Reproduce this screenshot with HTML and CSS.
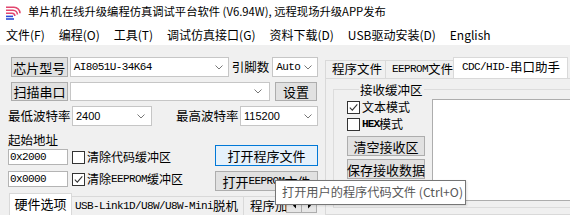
FILE: index.html
```html
<!DOCTYPE html>
<html lang="zh-CN">
<head>
<meta charset="utf-8">
<title>单片机在线升级编程仿真调试平台软件</title>
<link rel="stylesheet" href="styles.css">
</head>
<body>
<div class="win">
  <div class="titlebar">
    <svg class="appicon" viewBox="0 0 16 16" aria-hidden="true">
      <path d="M1 3.2 H9 A6 6 0 0 1 15 9.2" fill="none" stroke="#e2466f" stroke-width="1.6"/>
      <path d="M1 6.2 H8 A4.4 4.4 0 0 1 12.4 10.6" fill="none" stroke="#e2466f" stroke-width="1.6"/>
      <path d="M1 9.2 H7 A2.8 2.8 0 0 1 9.8 12" fill="none" stroke="#e2466f" stroke-width="1.6"/>
      <rect x="1" y="11.6" width="7" height="1.6" fill="#2c4bd6"/>
      <rect x="1" y="14.2" width="8" height="1.6" fill="#2c4bd6"/>
    </svg>
    <span class="title">单片机在线升级编程仿真调试平台软件 (V6.94W), 远程现场升级APP发布</span>
  </div>
  <div class="menubar">
    <span class="mi">文件(F)</span>
    <span class="mi">编程(O)</span>
    <span class="mi">工具(T)</span>
    <span class="mi">调试仿真接口(G)</span>
    <span class="mi">资料下载(D)</span>
    <span class="mi">USB驱动安装(D)</span>
    <span class="mi">English</span>
  </div>
  <div class="client">
    <div class="leftcol">
      <div class="row r1">
        <button class="btn b-lbl">芯片型号</button>
        <div class="combo c-chip"><span class="sl">AI8051U-34K64</span><svg class="chev" viewBox="0 0 8 5"><path d="M0.5 0.5L4 4L7.5 0.5"/></svg></div>
        <span class="lbl l-pin">引脚数</span>
        <div class="combo c-pin"><span class="sl">Auto</span><svg class="chev" viewBox="0 0 8 5"><path d="M0.5 0.5L4 4L7.5 0.5"/></svg></div>
      </div>
      <div class="row r2">
        <button class="btn b-lbl">扫描串口</button>
        <div class="combo c-port"><span></span><svg class="chev" viewBox="0 0 8 5"><path d="M0.5 0.5L4 4L7.5 0.5"/></svg></div>
        <button class="btn b-set">设置</button>
      </div>
      <div class="row r3">
        <span class="lbl l-baud">最低波特率</span>
        <div class="combo c-lo"><span class="num">2400</span><svg class="chev" viewBox="0 0 8 5"><path d="M0.5 0.5L4 4L7.5 0.5"/></svg></div>
        <span class="lbl l-baud2">最高波特率</span>
        <div class="combo c-hi"><span class="num">115200</span><svg class="chev" viewBox="0 0 8 5"><path d="M0.5 0.5L4 4L7.5 0.5"/></svg></div>
      </div>
      <div class="lower">
        <div class="addr">
          <div class="addr-lbl">起始地址</div>
          <div class="arow">
            <div class="input"><span class="sl">0x2000</span></div>
            <label class="chk"><span class="cb"></span>清除代码缓冲区</label>
          </div>
          <div class="arow arow2">
            <div class="input"><span class="sl">0x0000</span></div>
            <label class="chk"><span class="cb"><svg viewBox="0 0 11 11"><path d="M1.8 5.6L4.3 8.1L9.3 2.4"/></svg></span>清除<span class="sl">EEPROM</span>缓冲区</label>
          </div>
        </div>
        <div class="btncol">
          <button class="btn b-open hot">打开程序文件</button>
          <button class="btn b-open b-open2">打开<span class="sl">EEPROM</span>文件</button>
        </div>
      </div>
      <div class="btabs">
        <div class="btab-strip">
          <div class="btab sel">硬件选项</div>
          <div class="btab"><span class="sl">USB-Link1D/U8W/U8W-Mini</span>脱机</div>
          <div class="btab">程序加载次数</div>
        </div>
        <div class="scrl">
          <span class="sb"><svg viewBox="0 0 5 7"><path d="M4 0.5L1 3.5L4 6.5Z"/></svg></span>
          <span class="sb"><svg viewBox="0 0 5 7"><path d="M1 0.5L4 3.5L1 6.5Z"/></svg></span>
        </div>
      </div>
    </div>
    <div class="rightcol">
      <div class="tabs">
        <div class="tab t1">程序文件</div>
        <div class="tab t2"><span class="sl">EEPROM</span>文件</div>
        <div class="tab t3 sel"><span class="sl">CDC/HID-</span>串口助手</div>
      </div>
      <div class="pane">
        <fieldset class="group">
          <legend>接收缓冲区</legend>
          <div class="grp-body">
            <div class="grp-ctrls">
              <label class="chk"><span class="cb"><svg viewBox="0 0 11 11"><path d="M1.8 5.6L4.3 8.1L9.3 2.4"/></svg></span>文本模式</label>
              <label class="chk"><span class="cb"></span><span class="sl hex">HEX</span>模式</label>
              <button class="btn gbtn g1">清空接收区</button>
              <button class="btn gbtn">保存接收数据</button>
            </div>
            <div class="recv"></div>
          </div>
        </fieldset>
      </div>
    </div>
  </div>
  <div class="tooltip">打开用户的程序代码文件 (Ctrl+O)</div>
</div>
</body>
</html>
```

FILE: styles.css
```css
* { box-sizing: border-box; margin: 0; padding: 0; }
html, body { width: 570px; height: 215px; overflow: hidden; background: #fff; }
body {
  font-family: "Noto Sans CJK SC", "Noto Sans", sans-serif;
  font-size: 12px;
  color: #000;
  line-height: 1;
}
button { font: inherit; color: inherit; }

.win { position: relative; width: 570px; height: 215px; overflow: hidden; }

/* title */
.titlebar { height: 24px; display: flex; align-items: center; padding-left: 5px; background: #fff; }
.appicon { width: 16px; height: 16px; margin-right: 7px; flex: none; }
.title { font-size: 11.3px; white-space: nowrap; }

/* menu */
.menubar { height: 21px; display: flex; align-items: center; padding-left: 6px; background: #fff; white-space: nowrap; }
.mi { margin-right: 14px; font-size: 12px; }

/* client */
.client { display: flex; height: 170px; background: #f0f0f0; padding-top: 12px; }
.leftcol { width: 318px; flex: none; padding-left: 8px; display: flex; flex-direction: column; }
.row { display: flex; align-items: center; }
.r1 { height: 20px; padding-left: 3px; }
.r2 { height: 19px; padding-left: 3px; margin-top: 5px; }
.r3 { height: 20px; margin-top: 5px; }

.sl { font-family: "Liberation Mono", monospace; font-size: 11px; letter-spacing: -0.6px; }
.num { font-family: "Liberation Sans", sans-serif; font-size: 11px; }

.btn {
  background: #e1e1e1;
  border: 1px solid #adadad;
  display: flex; align-items: center; justify-content: center;
  white-space: nowrap;
}
.b-lbl { width: 57px; height: 100%; font-size: 13px; }
.b-set { width: 42px; height: 100%; margin-left: 5px; font-size: 13px; }

.combo {
  height: 100%;
  background: #fff;
  border: 1px solid #c6c6c6;
  display: flex; align-items: center; justify-content: space-between;
  padding: 0 5px 0 3px;
  white-space: nowrap;
}
.chev { width: 8px; height: 5px; fill: none; stroke: #777; stroke-width: 1; flex: none; }
.c-chip { width: 160px; margin-left: 2px; }
.c-pin { width: 46px; margin-left: 3px; }
.c-port { width: 200px; margin-left: 2px; padding-right: 7px; }
.c-lo { width: 80px; margin-left: 1px; padding-right: 6px; }
.c-hi { width: 78px; margin-left: 2px; }
.lbl { font-size: 12.5px; white-space: nowrap; }
.l-pin { margin-left: 3px; }
.l-baud { width: 63px; }
.l-baud2 { margin-left: 24px; width: 62px; }

/* lower */
.lower { display: flex; margin-top: 5px; height: 60px; }
.addr { width: 207px; }
.addr-lbl { height: 18px; font-size: 12.5px; display: flex; align-items: center; }
.arow { display: flex; align-items: center; height: 16px; }
.arow2 { margin-top: 6px; }
.input { width: 60px; height: 16px; background: #fff; border: 1px solid #b4b4b4; display: flex; align-items: center; padding-left: 1px; }
.chk { display: flex; align-items: center; white-space: nowrap; font-size: 12px; }
.arow .chk { margin-left: 4px; }
.cb {
  width: 13px; height: 13px; background: #fff; border: 1px solid #333;
  margin-right: 2px; flex: none; display: flex;
}
.cb svg { width: 11px; height: 11px; fill: none; stroke: #333; stroke-width: 1.1; }

.btncol { width: 103px; padding-top: 14px; display: flex; flex-direction: column; }
.b-open { height: 21px; font-size: 13px; }
.b-open.hot { background: #e5f1fb; border-color: #0078d7; }
.b-open2 { margin-top: 5px; height: 20px; }

/* bottom tabs */
.btabs { display: flex; margin-top: 2px; height: 22px; }
.btab-strip { width: 278px; display: flex; align-items: flex-end; overflow: hidden; padding-left: 2px; }
.btab {
  height: 19px; flex: none; border: 1px solid #d9d9d9; border-bottom: none;
  background: #f0f0f0; padding: 0 6px; display: flex; align-items: center;
  white-space: nowrap; margin-left: -1px; font-size: 12.5px;
}
.btab.sel { height: 22px; background: #fff; width: 63px; justify-content: center; font-size: 13px; padding-bottom: 3px; }
.btab:nth-child(2) { width: 173px; padding-left: 3px; }
.scrl { display: flex; padding-top: 5px; }
.sb {
  width: 16px; height: 15px; background: #e6e6e6; border: 1px solid #adadad;
  display: flex; align-items: center; justify-content: center;
}
.sb + .sb { margin-left: -1px; }
.sb svg { width: 5px; height: 7px; fill: #000; }

/* right column */
.rightcol { flex: 1; padding-left: 7px; overflow: hidden; display: flex; flex-direction: column; }
.tabs { display: flex; align-items: flex-end; height: 21px; }
.tab {
  height: 18px; border: 1px solid #d9d9d9; border-bottom: none; background: #f0f0f0;
  display: flex; align-items: center; white-space: nowrap; padding-left: 6px; font-size: 12.5px;
}
.t1 { width: 61px; }
.t2 { width: 69px; margin-left: -1px; }
.t3 { width: 115px; margin-left: -1px; }
.tab.sel { height: 21px; background: #fff; padding-left: 8px; padding-bottom: 2px; }
.pane { width: 270px; flex: 1; border: 1px solid #d9d9d9; background: #f0f0f0; padding: 3px 0 0 7px; }
.group { border: 1px solid #dcdcdc; height: 126px; padding: 0 0 0 13px; min-width: 0; }
.group legend { font-size: 12.5px; padding: 0 1px; margin-left: 12px; line-height: 15px; }
.grp-body { display: flex; padding-top: 2px; }
.grp-ctrls { width: 78px; display: flex; flex-direction: column; }
.grp-ctrls .chk { height: 16px; }
.grp-ctrls .chk + .chk { margin-top: 1px; }
.hex { font-weight: bold; letter-spacing: -0.9px; }
.gbtn { width: 78px; height: 20px; font-size: 13px; }
.g1 { margin-top: 4px; margin-bottom: 1px; }
.gbtn + .gbtn { margin-top: 2px; }
.recv { flex: 1; margin-left: 7px; height: 102px; background: #fff; border: 1px solid #adadad; }

/* tooltip */
.tooltip {
  position: absolute; left: 275px; top: 180px; width: 191px; height: 25px;
  background: #fff; border: 1px solid #767676; color: #575757;
  font-size: 12.2px; display: flex; align-items: center; padding-left: 6px;
  white-space: nowrap; box-shadow: 1px 1px 2px rgba(0,0,0,0.12);
}
```
